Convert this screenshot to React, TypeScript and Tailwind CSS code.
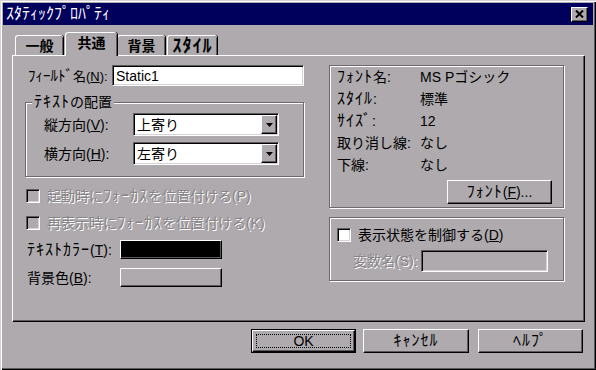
import React from "react";

const face = "bg-[#aeaaad]";
const raised =
  "border border-t-white border-l-white border-r-black border-b-black shadow-[inset_-1px_-1px_0_#5d5a5e]";
const sunken =
  "border border-t-[#5d5a5e] border-l-[#5d5a5e] border-r-white border-b-white shadow-[inset_1px_1px_0_#000,inset_-1px_-1px_0_#d6d2d5]";
const etched = "border border-[#6c686b] shadow-[inset_1px_1px_0_#fff,1px_1px_0_#fff]";
const disabled = "text-[#878387] [text-shadow:1px_1px_0_#fff]";

function U({ c }: { c: string }) {
  return <span className="underline underline-offset-1">{c}</span>;
}

// half-width kana: the old bitmap font drew them bigger and wider than Noto does
function K({ children }: { children: React.ReactNode }) {
  return <span className="text-[16px] tracking-[1px]">{children}</span>;
}

function Combo({ value }: { value: string }) {
  return (
    <div className={`flex h-[23px] w-[146px] items-center bg-white ${sunken}`}>
      <span className="flex-1 pl-[3px] pt-px">{value}</span>
      <div className={`mr-px flex h-[19px] w-[16px] items-center justify-center ${face} ${raised}`}>
        <svg width="7" height="4" viewBox="0 0 7 4">
          <path d="M0 0h7L3.5 4z" fill="#000" />
        </svg>
      </div>
    </div>
  );
}

function Check({ label, off }: { label: React.ReactNode; off?: boolean }) {
  return (
    <div className="flex h-[15px] items-center">
      <div className={`h-[14px] w-[14px] ${off ? face : "bg-white"} ${sunken}`} />
      <span className={`ml-[7px] whitespace-nowrap ${off ? disabled : ""}`}>{label}</span>
    </div>
  );
}

function Tab({ label, active, w }: { label: React.ReactNode; active?: boolean; w: string }) {
  if (active)
    return (
      <div
        className={`relative z-10 -mb-px flex h-[24px] items-start justify-center rounded-t-[3px] border-l border-t border-white pt-[3px] text-[14px] font-bold shadow-[inset_-1px_0_0_#5d5a5e,1px_0_0_#000] ${face} ${w}`}
      >
        {label}
      </div>
    );
  return (
    <div
      className={`flex h-[20px] items-center justify-center rounded-t-[3px] border-l border-t border-white text-[14px] font-bold shadow-[inset_-1px_0_0_#5d5a5e,1px_0_0_#000] ${w}`}
    >
      {label}
    </div>
  );
}

function Btn({ children, w, def }: { children: React.ReactNode; w: string; def?: boolean }) {
  if (def)
    return (
      <div className={`h-[24px] border border-black ${w}`}>
        <div className={`flex h-full items-center justify-center p-[3px] ${raised}`}>
          <div className="flex h-full w-full items-center justify-center border border-dotted border-black">
            {children}
          </div>
        </div>
      </div>
    );
  return <div className={`flex h-[24px] items-center justify-center ${raised} ${w}`}>{children}</div>;
}

export default function App() {
  return (
    <div
      className={`flex h-[370px] w-[596px] flex-col font-['Liberation_Sans','Noto_Sans_CJK_JP',sans-serif] text-[14px] leading-none text-black ${face} shadow-[inset_1px_1px_0_#d6d2d5,inset_2px_2px_0_#fff,inset_-1px_-1px_0_#000,inset_-2px_-2px_0_#5d5a5e]`}
    >
      {/* title */}
      <div className="mx-[3px] mt-[3px] flex h-[22px] items-center justify-between bg-[#00005c] pl-[3px] pr-[5px]">
        <span className="text-[16px] text-white">ｽﾀﾃｨｯｸﾌﾟﾛﾊﾟﾃｨ</span>
        <div className={`flex h-[15px] w-[17px] items-center justify-center ${face} ${raised}`}>
          <svg width="9" height="8" viewBox="0 0 9 8">
            <path d="M1 0.5L8 7.5M8 0.5L1 7.5" stroke="#000" strokeWidth="2" />
          </svg>
        </div>
      </div>

      {/* tabs */}
      <div className="ml-[15px] mt-[7px] flex h-[23px] items-end">
        <Tab label="一般" w="w-[48px]" />
        <div className="w-[2px]" />
        <Tab label="共通" active w="w-[52px]" />
        <Tab label="背景" w="w-[48px]" />
        <div className="w-[2px]" />
        <Tab label={<span className="text-[18px] tracking-[1px]">ｽﾀｲﾙ</span>} w="w-[50px]" />
      </div>

      {/* panel */}
      <div className="ml-[12px] flex h-[266px] w-[572px] border-l border-t border-white pl-[12px] pt-[9px] shadow-[inset_-1px_-1px_0_#5d5a5e,1px_1px_0_#000]">
        {/* left column */}
        <div className="flex w-[279px] flex-col">
          <div className="flex h-[21px] items-center">
            <span className="w-[87px] whitespace-nowrap pl-[3px] text-[13px]">
              <span className="text-[15px]">ﾌｨｰﾙﾄﾞ</span>名(<U c="N" />):
            </span>
            <div className={`flex h-[21px] w-[192px] items-center bg-white pl-[3px] ${sunken}`}>Static1</div>
          </div>

          <div className={`relative mt-[16px] flex h-[75px] flex-col gap-[6px] pt-[10px] ${etched}`}>
            <span className={`absolute -top-[9px] left-[6px] whitespace-nowrap px-[2px] ${face}`}>
              <K>ﾃｷｽﾄ</K>の配置
            </span>
            <div className="flex items-center">
              <span className="w-[107px] pl-[18px]">
                縦方向(<U c="V" />):
              </span>
              <Combo value="上寄り" />
            </div>
            <div className="flex items-center">
              <span className="w-[107px] pl-[18px]">
                横方向(<U c="H" />):
              </span>
              <Combo value="左寄り" />
            </div>
          </div>

          <div className="ml-px mt-[11px]">
            <Check
              off
              label={
                <>
                  起動時に<K>ﾌｫｰｶｽ</K>を位置付ける(P)
                </>
              }
            />
          </div>
          <div className="ml-px mt-[12px]">
            <Check
              off
              label={
                <>
                  再表示時に<K>ﾌｫｰｶｽ</K>を位置付ける(K)
                </>
              }
            />
          </div>

          <div className="mt-[10px] flex h-[19px] items-center">
            <span className="w-[95px] whitespace-nowrap pl-[2px]">
              <K>ﾃｷｽﾄｶﾗｰ</K>(<U c="T" />):
            </span>
            <div className={`h-[19px] w-[102px] bg-black ${raised}`} />
          </div>
          <div className="mt-[9px] flex h-[19px] items-center">
            <span className="w-[95px] pl-[2px]">
              背景色(<U c="B" />):
            </span>
            <div className={`h-[19px] w-[102px] ${face} ${raised}`} />
          </div>
        </div>

        {/* right column */}
        <div className="ml-[25px] flex w-[235px] flex-col">
          <div className={`flex h-[143px] flex-col pl-[7px] ${etched}`}>
            {[
              [<K>ﾌｫﾝﾄ</K>, "名:", "MS Pゴシック"],
              [<K>ｽﾀｲﾙ</K>, ":", "標準"],
              [<K>ｻｲｽﾞ</K>, ":", "12"],
              ["", "取り消し線:", "なし"],
              ["", "下線:", "なし"],
            ].map(([a, b, v], i) => (
              <div key={i} className="flex h-[22px] items-center">
                <span className="w-[83px] whitespace-nowrap">
                  {a}
                  {b}
                </span>
                <span className="whitespace-nowrap">{v}</span>
              </div>
            ))}
            <div className="ml-[110px] mt-[4px]">
              <Btn w="w-[105px]">
                <K>ﾌｫﾝﾄ</K>(<U c="F" />)...
              </Btn>
            </div>
          </div>

          <div className={`mt-[9px] flex h-[64px] flex-col pl-[7px] pt-[9px] ${etched}`}>
            <Check
              label={
                <span>
                  表示状態を制御する(<U c="D" />)
                </span>
              }
            />
            <div className="mt-[8px] flex items-center">
              <span className={`w-[84px] pl-[16px] ${disabled}`}>変数名(S):</span>
              <div className={`h-[22px] w-[127px] ${face} ${sunken}`} />
            </div>
          </div>
        </div>
      </div>

      {/* buttons */}
      <div className="ml-[251px] mt-[8px] flex">
        <Btn def w="w-[105px]">
          OK
        </Btn>
        <div className="ml-[7px]">
          <Btn w="w-[106px]">
            <K>ｷｬﾝｾﾙ</K>
          </Btn>
        </div>
        <div className="ml-[9px]">
          <Btn w="w-[105px]">
            <K>ﾍﾙﾌﾟ</K>
          </Btn>
        </div>
      </div>
    </div>
  );
}
